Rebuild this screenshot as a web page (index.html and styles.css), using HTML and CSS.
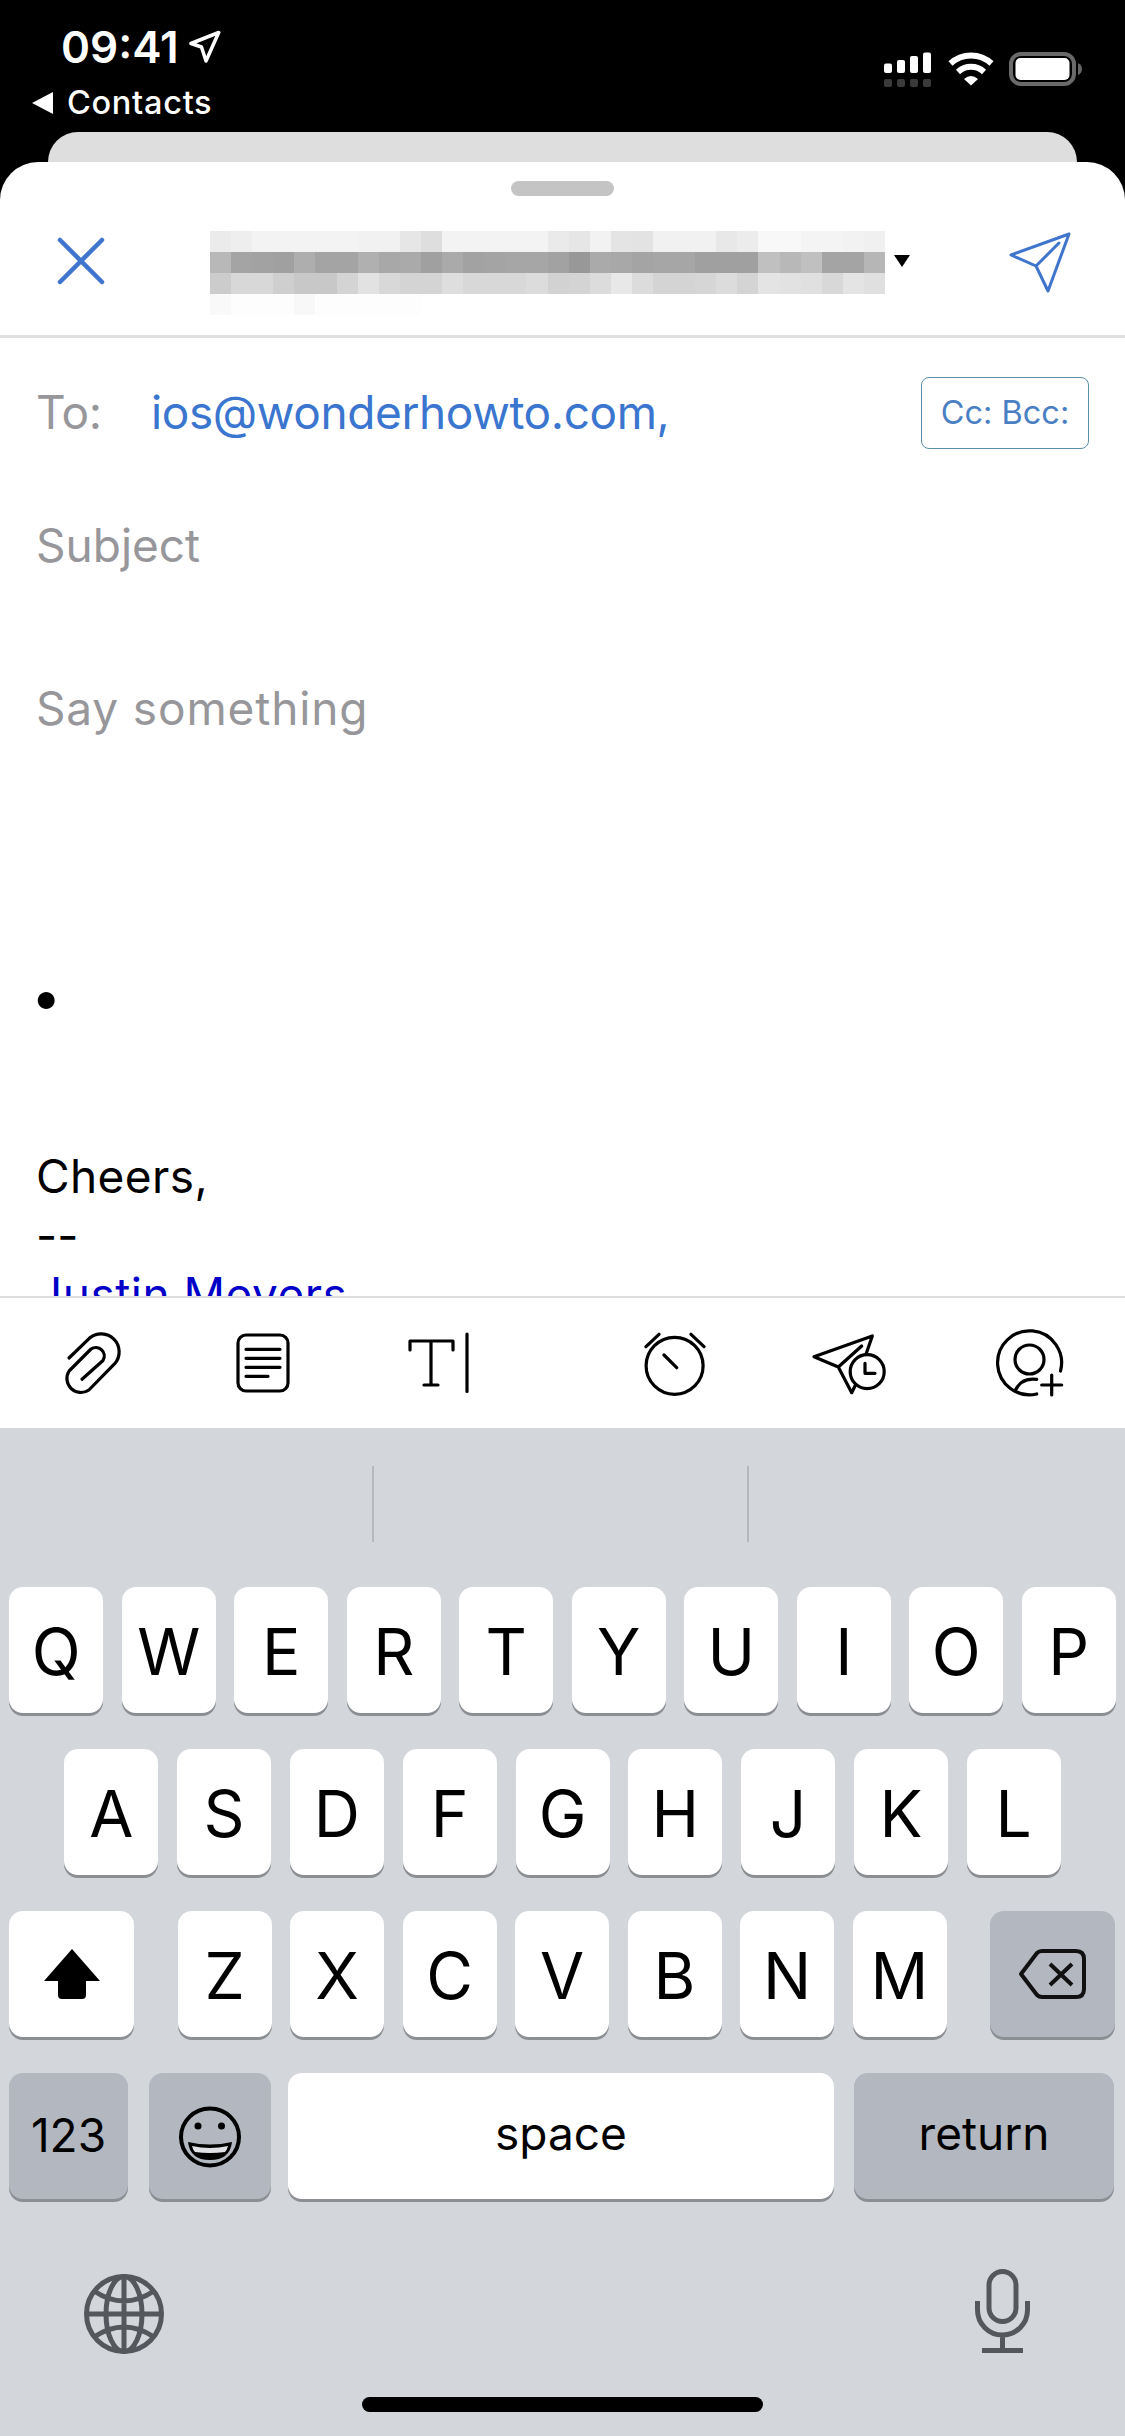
FILE: index.html
```html
<!DOCTYPE html>
<html lang="en">
<head>
<meta charset="utf-8">
<title>New message</title>
<link rel="stylesheet" href="styles.css">
</head>
<body>
<div class="phone">
  <header class="status">
    <div class="status-left">
      <div class="clock">
        <span class="time">09:41</span>
        <svg class="loc" viewBox="190 30 33 34"><path d="M220.7 32.5 L193 43.5 L203.5 47 L208 61 Z"/></svg>
      </div>
      <div class="back"><span class="back-arrow"></span><span class="back-label">Contacts</span></div>
    </div>
    <svg class="status-icons" viewBox="880 48 205 42">
      <g fill="#fff">
        <rect x="884" y="63.5" width="8" height="9.5" rx="2"/>
        <rect x="897" y="60" width="8" height="13" rx="2"/>
        <rect x="910" y="56" width="8" height="17" rx="2"/>
        <rect x="923" y="52.5" width="8" height="20.5" rx="2"/>
      </g>
      <g fill="#3a3a3a">
        <rect x="884" y="79" width="8" height="8" rx="2"/>
        <rect x="897" y="79" width="8" height="8" rx="2"/>
        <rect x="910" y="79" width="8" height="8" rx="2"/>
        <rect x="923" y="79" width="8" height="8" rx="2"/>
      </g>
      <g fill="none" stroke="#fff" stroke-width="6">
        <path d="M950.5 63.5 A30 30 0 0 1 991.5 63.5"/>
        <path d="M958 72 A19 19 0 0 1 984 72"/>
      </g>
      <path fill="#fff" d="M964 79 Q971 73 978 79 L971 85.5 Z"/>
      <rect x="1011" y="54" width="63" height="30" rx="10" fill="none" stroke="#6a6a6a" stroke-width="4"/>
      <rect x="1015.5" y="58" width="54" height="22" rx="5" fill="#fff"/>
      <path fill="#666" d="M1078 63 Q1082 65 1082 69 Q1082 73 1078 75 Z"/>
    </svg>
  </header>

  <div class="back-card"></div>

  <main class="sheet">
    <div class="handle"></div>

    <div class="compose-head">
      <svg class="close" viewBox="56 236 50 50"><path d="M60 240 L102 282 M102 240 L60 282"/></svg>
      <svg class="sender" viewBox="0 0 32 4" preserveAspectRatio="none" shape-rendering="crispEdges" aria-label="Sender address">
        <g>
          <rect x="0" y="0" width="1" height="1" fill="#ebebeb"/><rect x="1" y="0" width="1" height="1" fill="#eeeeee"/><rect x="2" y="0" width="5" height="1" fill="#f3f3f3"/><rect x="7" y="0" width="2" height="1" fill="#f1f1f1"/><rect x="9" y="0" width="1" height="1" fill="#e6e6e6"/><rect x="10" y="0" width="1" height="1" fill="#dedede"/><rect x="11" y="0" width="5" height="1" fill="#f3f3f3"/><rect x="16" y="0" width="1" height="1" fill="#eaeaea"/><rect x="17" y="0" width="1" height="1" fill="#e6e6e6"/><rect x="18" y="0" width="1" height="1" fill="#f2f2f2"/><rect x="19" y="0" width="1" height="1" fill="#e4e4e4"/><rect x="20" y="0" width="1" height="1" fill="#e3e3e3"/><rect x="21" y="0" width="3" height="1" fill="#f1f1f1"/><rect x="24" y="0" width="1" height="1" fill="#e8e8e8"/><rect x="25" y="0" width="1" height="1" fill="#ececec"/><rect x="26" y="0" width="2" height="1" fill="#f8f8f8"/><rect x="28" y="0" width="2" height="1" fill="#f4f4f4"/><rect x="30" y="0" width="1" height="1" fill="#f2f2f2"/><rect x="31" y="0" width="1" height="1" fill="#f0f0f0"/>
        </g>
        <g>
          <rect x="0" y="1" width="1" height="1" fill="#b8b8b8"/><rect x="1" y="1" width="1" height="1" fill="#a4a4a4"/><rect x="2" y="1" width="1" height="1" fill="#a2a2a2"/><rect x="3" y="1" width="1" height="1" fill="#a0a0a0"/><rect x="4" y="1" width="1" height="1" fill="#aeaeae"/><rect x="5" y="1" width="2" height="1" fill="#a4a4a4"/><rect x="7" y="1" width="1" height="1" fill="#b0b0b0"/><rect x="8" y="1" width="1" height="1" fill="#a8a8a8"/><rect x="9" y="1" width="1" height="1" fill="#aaaaaa"/><rect x="10" y="1" width="1" height="1" fill="#a0a0a0"/><rect x="11" y="1" width="1" height="1" fill="#aaaaaa"/><rect x="12" y="1" width="1" height="1" fill="#a2a2a2"/><rect x="13" y="1" width="1" height="1" fill="#a4a4a4"/><rect x="14" y="1" width="2" height="1" fill="#a6a6a6"/><rect x="16" y="1" width="1" height="1" fill="#a2a2a2"/><rect x="17" y="1" width="1" height="1" fill="#989898"/><rect x="18" y="1" width="1" height="1" fill="#aaaaaa"/><rect x="19" y="1" width="1" height="1" fill="#a8a8a8"/><rect x="20" y="1" width="1" height="1" fill="#a4a4a4"/><rect x="21" y="1" width="2" height="1" fill="#a6a6a6"/><rect x="23" y="1" width="3" height="1" fill="#a0a0a0"/><rect x="26" y="1" width="1" height="1" fill="#c0c0c0"/><rect x="27" y="1" width="1" height="1" fill="#b8b8b8"/><rect x="28" y="1" width="1" height="1" fill="#c0c0c0"/><rect x="29" y="1" width="2" height="1" fill="#a4a4a4"/><rect x="31" y="1" width="1" height="1" fill="#b6b6b6"/>
        </g>
        <g>
          <rect x="0" y="2" width="1" height="1" fill="#cccccc"/><rect x="1" y="2" width="2" height="1" fill="#d8d8d8"/><rect x="3" y="2" width="1" height="1" fill="#cfcfcf"/><rect x="4" y="2" width="2" height="1" fill="#c8c8c8"/><rect x="6" y="2" width="1" height="1" fill="#d4d4d4"/><rect x="7" y="2" width="1" height="1" fill="#e2e2e2"/><rect x="8" y="2" width="1" height="1" fill="#d8d8d8"/><rect x="9" y="2" width="2" height="1" fill="#d4d4d4"/><rect x="11" y="2" width="1" height="1" fill="#dedede"/><rect x="12" y="2" width="3" height="1" fill="#d8d8d8"/><rect x="15" y="2" width="1" height="1" fill="#dcdcdc"/><rect x="16" y="2" width="1" height="1" fill="#d2d2d2"/><rect x="17" y="2" width="1" height="1" fill="#d4d4d4"/><rect x="18" y="2" width="1" height="1" fill="#dcdcdc"/><rect x="19" y="2" width="1" height="1" fill="#e8e8e8"/><rect x="20" y="2" width="1" height="1" fill="#dcdcdc"/><rect x="21" y="2" width="2" height="1" fill="#d4d4d4"/><rect x="23" y="2" width="1" height="1" fill="#d6d6d6"/><rect x="24" y="2" width="1" height="1" fill="#dcdcdc"/><rect x="25" y="2" width="1" height="1" fill="#d4d4d4"/><rect x="26" y="2" width="1" height="1" fill="#e4e4e4"/><rect x="27" y="2" width="1" height="1" fill="#e2e2e2"/><rect x="28" y="2" width="1" height="1" fill="#e0e0e0"/><rect x="29" y="2" width="1" height="1" fill="#d8d8d8"/><rect x="30" y="2" width="1" height="1" fill="#e4e4e4"/><rect x="31" y="2" width="1" height="1" fill="#e0e0e0"/>
        </g>
        <g>
          <rect x="0" y="3" width="1" height="1" fill="#f9f9f9"/><rect x="1" y="3" width="3" height="1" fill="#fdfdfd"/><rect x="4" y="3" width="1" height="1" fill="#f8f8f8"/><rect x="5" y="3" width="5" height="1" fill="#fdfdfd"/>
        </g>
      </svg>
      <span class="sender-caret"></span>
      <svg class="send" viewBox="1008 230 66 66"><path d="M1070 234 L1012 255 L1037 266 L1049 291 Z M1037 266 L1060 243"/></svg>
    </div>

    <section class="message">
      <div class="recipient">
        <span class="label">To:</span>
        <span class="address">ios@wonderhowto.com,</span>
        <span class="cc">Cc: Bcc:</span>
      </div>
      <div class="placeholder subject">Subject</div>
      <div class="placeholder prompt">Say something</div>
      <div class="line bullet">•</div>
      <div class="line cheers">Cheers,</div>
      <div class="line">--</div>
      <div class="line name">Justin Meyers</div>
    </section>

    <nav class="toolbar">
      <svg class="tool tool-clip" viewBox="63 0 60 80"><path d="M69 37 L89.3 17.3 A18 18 0 0 1 114.7 42.7 L88.9 69 A14 14 0 0 1 69.1 50 L91 28 A8.5 8.5 0 0 1 103 39.5 L82 58.3"/></svg>
      <svg class="tool tool-doc" viewBox="235 0 56 80"><rect x="238" y="14" width="50" height="56" rx="8"/><path d="M246 28.3 H280 M246 37.3 H280 M246 46.3 H280 M246 55.3 H268"/></svg>
      <svg class="tool tool-text" viewBox="404 0 64 80"><path d="M407 29 V20 H450 V29 M428 20 V64 M421 64 H435 M464 13 V70.5"/></svg>
      <svg class="tool tool-alarm" viewBox="643 0 63 80"><circle cx="674.6" cy="44.8" r="28.5"/><path d="M646 25.7 L659 13.3 M691 13.3 L704 25.7 M664 34 L676.7 46.7"/></svg>
      <svg class="tool tool-later" viewBox="811 0 76 80"><path d="M855 65 L851.7 71.7 L838.3 46 L814 35.7 L872.3 15 L866 33.3 M838.3 46 L861.7 25"/><circle cx="867.2" cy="50.7" r="17"/><path d="M865 42.3 V52.3 H875"/></svg>
      <svg class="tool tool-person" viewBox="995 0 69 80"><path d="M1060.5 50 A32 32 0 1 0 1036.7 73"/><circle cx="1029.5" cy="38.5" r="14.5"/><path d="M1036.7 58.3 C1027 57 1019 61 1015 70 M1051.7 54 V74 M1041.7 64 H1061.7"/></svg>
    </nav>
  </main>

  <section class="keyboard">
    <div class="suggestions"><span class="rule"></span><span class="rule"></span></div>
    <div class="keys">
      <div class="row">
        <span class="key">Q</span><span class="key">W</span><span class="key">E</span><span class="key">R</span><span class="key">T</span><span class="key">Y</span><span class="key">U</span><span class="key">I</span><span class="key">O</span><span class="key">P</span>
      </div>
      <div class="row row-home">
        <span class="key">A</span><span class="key">S</span><span class="key">D</span><span class="key">F</span><span class="key">G</span><span class="key">H</span><span class="key">J</span><span class="key">K</span><span class="key">L</span>
      </div>
      <div class="row row-z">
        <span class="key key-shift">
          <svg class="glyph-shift" viewBox="0 0 58 52"><path d="M29 1 L57 33 H43 V47 Q43 51 39 51 H19 Q15 51 15 47 V33 H1 Z"/></svg>
        </span>
        <span class="key">Z</span><span class="key">X</span><span class="key">C</span><span class="key">V</span><span class="key">B</span><span class="key">N</span><span class="key">M</span>
        <span class="key key-dark key-delete">
          <svg class="glyph-delete" viewBox="1016 1947 71 54"><path d="M1020 1974 L1036 1953 Q1038 1951 1041 1951 H1075 Q1083 1951 1083 1959 V1989 Q1083 1997 1075 1997 H1041 Q1038 1997 1036 1995 Z M1049 1964 L1071 1985 M1071 1964 L1049 1985"/></svg>
        </span>
      </div>
      <div class="row row-bottom">
        <span class="key key-dark key-num">123</span>
        <span class="key key-dark key-emoji">
          <svg class="glyph-emoji" viewBox="177 2104 66 64"><ellipse class="face" cx="210" cy="2136" rx="29" ry="28.5"/><circle class="eye" cx="198" cy="2125" r="3.5"/><circle class="eye" cx="221.5" cy="2125" r="3.5"/><path class="mouth" d="M188 2141 Q210 2146 232 2141 Q230 2159 210 2159 Q190 2159 188 2141 Z"/><path class="teeth" d="M192 2145 Q210 2149 228 2145 Q227 2149 225 2151 Q210 2153 195 2151 Q193 2149 192 2145 Z"/></svg>
        </span>
        <span class="key key-space">space</span>
        <span class="key key-dark key-return">return</span>
      </div>
    </div>
    <div class="system-row">
      <svg class="globe" viewBox="82 2273 84 84">
        <circle cx="124" cy="2315" r="37.5"/>
        <ellipse cx="124" cy="2315" rx="18" ry="37.5"/>
        <path d="M124 2277.5 V2352.5 M86.5 2315 H161.5 M94 2292 Q124 2312 154 2292 M94 2338 Q124 2318 154 2338"/>
      </svg>
      <svg class="mic" viewBox="972 2268 62 88">
        <rect x="989" y="2272.5" width="27" height="50" rx="13.5"/>
        <path d="M977.5 2302 V2311 A25 25 0 0 0 1027.5 2311 V2302 M1002.5 2336 V2351 M982 2351.5 H1023"/>
      </svg>
    </div>
    <div class="home-bar"></div>
  </section>
</div>
</body>
</html>
```

FILE: styles.css
```css
* { box-sizing: border-box; }

html, body {
  margin: 0;
  padding: 0;
  background: #000;
}

.phone {
  width: 1125px;
  height: 2436px;
  overflow: hidden;
  display: flex;
  flex-direction: column;
  background: #000;
  font-family: Inter, "Liberation Sans", sans-serif;
}

/* Status bar */
.status {
  flex: none;
  height: 132px;
  display: flex;
  justify-content: space-between;
  align-items: flex-start;
  color: #fff;
}

.status-left {
  padding: 20px 0 0 32px;
}

.clock {
  display: flex;
  align-items: flex-start;
  padding-left: 29px;
}

.time {
  font-size: 44px;
  font-weight: 600;
  line-height: 54px;
}

.loc {
  width: 33px;
  height: 34px;
  margin: 10px 0 0 9px;
  fill: none;
  stroke: #fff;
  stroke-width: 3.5;
  stroke-linejoin: round;
}

.back {
  display: flex;
  align-items: center;
  height: 38px;
  margin-top: 10px;
}

.back-arrow {
  width: 0;
  height: 0;
  border-top: 11px solid transparent;
  border-bottom: 11px solid transparent;
  border-right: 21px solid #fff;
  margin-right: 14px;
}

.back-label {
  font-size: 32.5px;
  font-weight: 500;
  letter-spacing: 0.7px;
  line-height: 38px;
}

.status-icons {
  width: 205px;
  height: 42px;
  margin: 48px 40px 0 0;
}

/* Card peeking out behind the composer */
.back-card {
  flex: none;
  height: 30px;
  margin: 0 48px;
  background: #dedede;
  border-radius: 30px 30px 0 0;
}

/* Composer sheet */
.sheet {
  flex: none;
  height: 1266px;
  display: flex;
  flex-direction: column;
  background: #fff;
  border-radius: 38px 38px 0 0;
}

.handle {
  flex: none;
  width: 103px;
  height: 15px;
  margin: 19px auto 0;
  background: #c4c4c4;
  border-radius: 8px;
}

.compose-head {
  flex: none;
  height: 142px;
  display: flex;
  align-items: flex-start;
  padding-top: 35px;
  border-bottom: 3px solid #dfdfdf;
}

.close {
  width: 50px;
  height: 50px;
  margin: 5px 0 0 56px;
  fill: none;
  stroke: #3f75cc;
  stroke-width: 4.5;
  stroke-linecap: round;
}

.sender {
  width: 675px;
  height: 84px;
  margin-left: 104px;
}

.sender-caret {
  width: 0;
  height: 0;
  margin: 24px 0 0 9px;
  border-left: 8.5px solid transparent;
  border-right: 8.5px solid transparent;
  border-top: 12px solid #000;
}

.send {
  width: 66px;
  height: 66px;
  margin: -1px 0 0 97px;
  fill: none;
  stroke: #3f75cc;
  stroke-width: 3;
  stroke-linejoin: round;
  stroke-linecap: round;
}

.message {
  flex: 1;
  min-height: 0;
  overflow: hidden;
  padding-left: 36px;
  font-size: 46px;
  color: #000;
}

.recipient {
  position: relative;
  display: flex;
  padding-top: 46px;
  line-height: 56px;
}

.label {
  color: #97979b;
  width: 115px;
  letter-spacing: -0.5px;
}

.address {
  color: #3a75cf;
  letter-spacing: -0.4px;
}

.cc {
  position: absolute;
  left: 885px;
  top: 39px;
  width: 168px;
  height: 72px;
  border: 1.5px solid #5b8fa8;
  border-radius: 8px;
  color: #4a7fc4;
  font-size: 32.5px;
  line-height: 69px;
  text-align: center;
  white-space: nowrap;
}

.placeholder {
  color: #97979b;
  line-height: 56px;
}

.subject { margin-top: 77px; }
.prompt { margin-top: 107px; letter-spacing: 0.85px; }

.line { line-height: 59px; }
.bullet { margin: 231px 0 0 -5px; font-size: 54px; }
.cheers { margin-top: 121px; letter-spacing: 0.4px; }
.name { color: #0000c8; letter-spacing: 0.5px; }

/* Attachment and action icons */
.toolbar {
  flex: none;
  height: 132px;
  display: flex;
  align-items: flex-start;
  gap: 112px;
  padding: 23px 0 0 63px;
  background: #fff;
  border-top: 2px solid #dddddd;
}

.tool {
  height: 80px;
  flex: none;
  fill: none;
  stroke: #000;
  stroke-width: 3.2;
  stroke-linecap: round;
  stroke-linejoin: round;
}

.tool-clip { width: 60px; }
.tool-doc { width: 56px; margin-right: 4px; }
.tool-text { width: 64px; margin-right: 60px; }
.tool-alarm { width: 63px; }
.tool-later { width: 76px; margin-left: -7px; }
.tool-person { width: 69px; margin-left: -4px; }

/* Keyboard */
.keyboard {
  flex: 1;
  min-height: 0;
  background: #d3d6db;
}

.suggestions {
  height: 159px;
  display: flex;
  padding: 38px 0 0 372px;
  gap: 373px;
}

.rule {
  width: 2px;
  height: 76px;
  background: #b5b8bd;
}

.keys {
  display: flex;
  flex-direction: column;
  gap: 36px;
}

.row {
  display: flex;
  justify-content: center;
  gap: 18.5px;
}

.row-home { gap: 18.8px; }

.key {
  flex: none;
  width: 94px;
  height: 126px;
  display: flex;
  align-items: center;
  justify-content: center;
  padding-top: 4px;
  background: #fff;
  border-radius: 14px;
  box-shadow: 0 3px 0 #8b8e93;
  color: #000;
  font-size: 64px;
  line-height: 1;
}

.key-dark { background: #b3b7bf; }

.row-z {
  justify-content: flex-start;
  padding-left: 9px;
}

.key-shift {
  width: 125px;
  margin-right: 25px;
  padding-top: 0;
}

.glyph-shift {
  width: 58px;
  height: 52px;
  fill: #000;
}

.key-delete {
  width: 125px;
  margin-left: 25px;
  padding-top: 0;
}

.glyph-delete {
  width: 71px;
  height: 54px;
  fill: none;
  stroke: #111;
  stroke-width: 4;
  stroke-linejoin: round;
}

.row-bottom {
  justify-content: flex-start;
  gap: 0;
  padding-left: 9px;
}

.key-num {
  width: 119px;
  margin-right: 21px;
  padding: 0 0 2px;
  font-size: 46px;
}

.key-emoji {
  width: 122px;
  margin-right: 17px;
  padding-top: 2px;
}

.glyph-emoji {
  width: 66px;
  height: 64px;
}

.face {
  fill: none;
  stroke: #000;
  stroke-width: 4;
}

.eye, .mouth { fill: #000; }
.teeth { fill: #dfe1e5; }

.key-space {
  width: 546px;
  margin-right: 20px;
  padding: 0 0 7px;
  font-size: 46px;
}

.key-return {
  width: 260px;
  padding: 0 0 7px;
  font-size: 46px;
}

.system-row {
  display: flex;
  justify-content: space-between;
  padding: 68px 91px 0 82px;
}

.globe, .mic {
  fill: none;
  stroke: #54575c;
  stroke-width: 5;
}

.globe { width: 84px; height: 84px; margin-top: 5px; }
.mic { width: 62px; height: 88px; }

.home-bar {
  width: 401px;
  height: 15px;
  margin: 41px auto 0;
  background: #000;
  border-radius: 8px;
}
```
